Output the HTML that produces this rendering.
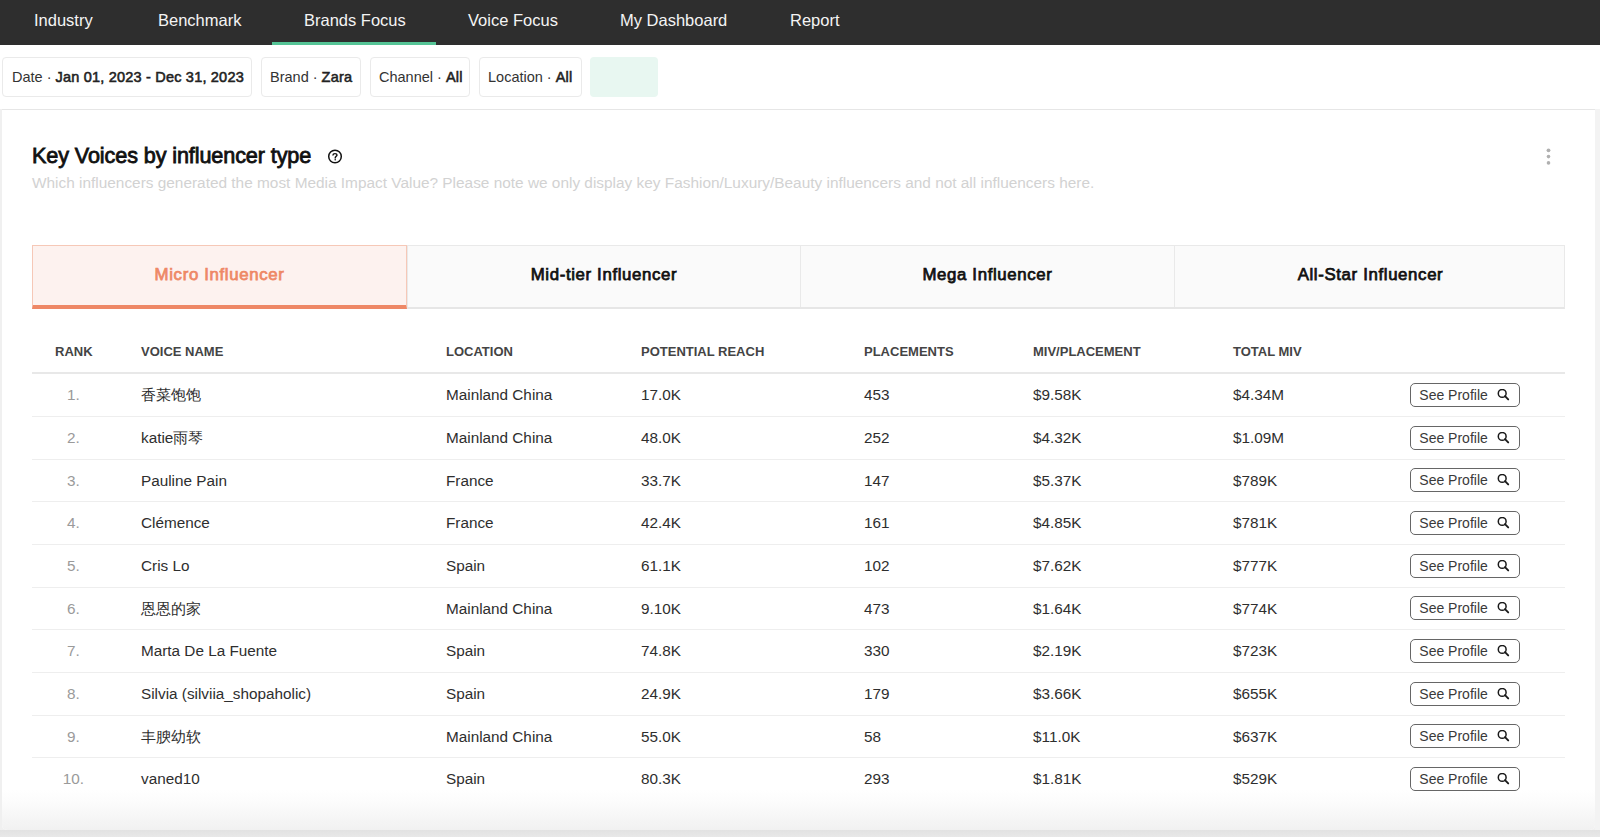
<!DOCTYPE html>
<html>
<head>
<meta charset="utf-8">
<style>
*{box-sizing:border-box;margin:0;padding:0}
html,body{width:1600px;height:837px;overflow:hidden}
body{background:#f0f0f0;font-family:"Liberation Sans",sans-serif;position:relative;color:#222}
.abs{position:absolute}
.nav{left:0;top:0;width:1600px;height:45px;background:#2e2e2e}
.nav span{position:absolute;top:11px;font-size:16.5px;color:#f4f4f4;white-space:nowrap;line-height:18px}
.nav .ul{position:absolute;left:272px;top:42px;width:164px;height:3px;background:#55c496}
.fbar{left:0;top:45px;width:1600px;height:64px;background:#fff}
.chip{position:absolute;top:57px;height:40px;border:1px solid #eaeaea;border-radius:4px;background:#fff;font-size:14.5px;color:#333;white-space:nowrap;line-height:38.6px}
.chip b{color:#222;font-weight:400;-webkit-text-stroke:0.55px #222;letter-spacing:0.2px}
.green{position:absolute;left:590px;top:57px;width:68px;height:40px;border-radius:4px;background:#e8f7f1}
.card{left:2px;top:109px;width:1593px;height:721px;background:#fff;border-top:1px solid #e6e6e6;border-radius:0 0 5px 5px}
.fade{left:2px;top:790px;width:1593px;height:40px;background:linear-gradient(#fff 0%,#fcfcfc 30%,#f1f1f1 100%);border-radius:0 0 5px 5px}
.rstrip{left:1595px;top:109px;width:5px;height:728px;background:#f3f3f3}
.bband{left:0;top:830px;width:1600px;height:7px;background:linear-gradient(#e2e2e2,#e8e8e8)}
.lstrip{left:0;top:109px;width:2px;height:728px;background:#f0f0f0}
#rows{position:absolute;left:0;top:0;z-index:2}
h1{position:absolute;left:32px;top:144px;font-size:21.6px;font-weight:400;-webkit-text-stroke:0.8px #111;letter-spacing:-0.1px;color:#111;white-space:nowrap;line-height:24px}
.sub{position:absolute;left:32px;top:174px;font-size:15.4px;color:#d2d2d2;white-space:nowrap;line-height:18px}
.tabs{left:32px;top:245px;width:1533px;height:64px;background:#fafafa;border:1px solid #e9e9e9;border-bottom:2px solid #e6e6e6}
.tab{position:absolute;top:0;height:100%;border-left:1px solid #e9e9e9;font-size:16.8px;font-weight:400;-webkit-text-stroke:0.75px #111;letter-spacing:0.65px;color:#111;text-align:center;line-height:58px;white-space:nowrap}
.tab.act{background:#fdf2ef;border:1px solid #f6c8b7;border-bottom:4px solid #ee8866;color:#ee8866;-webkit-text-stroke:0.75px #ee8866;top:-1px;height:64px;left:-1px}
.th{position:absolute;top:344px;font-size:13px;font-weight:700;color:#444;white-space:nowrap;line-height:16px}
.hline{left:32px;top:372px;width:1533px;height:2px;background:#e8e8e8}
.row{position:absolute;left:32px;width:1533px;height:43px;border-bottom:1px solid #eeeeee}
.c{position:absolute;top:0.4px;line-height:42px;font-size:15.3px;color:#2e2e2e;letter-spacing:0;white-space:nowrap}
.rk{color:#9a9a9a;letter-spacing:0;width:83px;text-align:center;left:0}
.nm{left:109px}.lc{left:414px}.pr{left:609px}.pl{left:832px}.mp{left:1001px}.tm{left:1201px}
.btn{position:absolute;left:1378px;top:9px;width:110px;height:24px;border:1px solid #666;border-radius:5px;font-size:14px;color:#3a3a3a;line-height:22px;padding-left:8.3px;white-space:nowrap}
.btn svg{position:absolute;left:85px;top:5px}
</style>
</head>
<body>
<div class="abs nav">
  <span style="left:34px">Industry</span>
  <span style="left:158px">Benchmark</span>
  <span style="left:304px">Brands Focus</span>
  <span style="left:468px">Voice Focus</span>
  <span style="left:620px">My Dashboard</span>
  <span style="left:790px">Report</span>
  <div class="ul"></div>
</div>
<div class="abs fbar"></div>
<div class="chip" style="left:2px;width:250px;padding-left:9px">Date · <b>Jan 01, 2023 - Dec 31, 2023</b></div>
<div class="chip" style="left:261px;width:100px;padding-left:8px">Brand · <b>Zara</b></div>
<div class="chip" style="left:370px;width:100px;padding-left:8px">Channel · <b>All</b></div>
<div class="chip" style="left:479px;width:103px;padding-left:8px">Location · <b>All</b></div>
<div class="green"></div>

<div class="abs card"></div>
<div class="abs rstrip"></div>
<div class="abs lstrip"></div>
<div class="abs bband"></div>

<h1>Key Voices by influencer type</h1>
<svg class="abs" style="left:326.5px;top:148px" width="16" height="16" viewBox="0 0 16 16">
  <circle cx="8" cy="8.5" r="6.3" fill="none" stroke="#111" stroke-width="1.5"/>
  <path d="M6 7 C6 5.2 10 5.2 10 7 C10 8.2 8.2 8.4 8.2 10" fill="none" stroke="#111" stroke-width="1.4" stroke-linecap="round"/>
  <circle cx="8.2" cy="11.8" r="0.8" fill="#111"/>
</svg>
<svg class="abs" style="left:1544px;top:148px" width="8" height="18" viewBox="0 0 8 18">
  <circle cx="4.5" cy="2.3" r="1.9" fill="#b0b0b0"/><circle cx="4.5" cy="8.6" r="1.8" fill="#b0b0b0"/><circle cx="4.5" cy="14.9" r="1.8" fill="#b0b0b0"/>
</svg>
<div class="sub">Which influencers generated the most Media Impact Value? Please note we only display key Fashion/Luxury/Beauty influencers and not all influencers here.</div>

<div class="abs tabs">
  <div class="tab act" style="width:375px">Micro Influencer</div>
  <div class="tab" style="left:374px;width:393px">Mid-tier Influencer</div>
  <div class="tab" style="left:767px;width:374px">Mega Influencer</div>
  <div class="tab" style="left:1141px;width:392px">All-Star Influencer</div>
</div>

<div class="th" style="left:55px">RANK</div>
<div class="th" style="left:141px">VOICE NAME</div>
<div class="th" style="left:446px">LOCATION</div>
<div class="th" style="left:641px">POTENTIAL REACH</div>
<div class="th" style="left:864px">PLACEMENTS</div>
<div class="th" style="left:1033px">MIV/PLACEMENT</div>
<div class="th" style="left:1233px">TOTAL MIV</div>
<div class="abs hline"></div>

<!--ROWS--><div id="rows">
<div class="row" style="top:374.00px"><div class="c rk">1.</div><div class="c nm">香菜饱饱</div><div class="c lc">Mainland China</div><div class="c pr">17.0K</div><div class="c pl">453</div><div class="c mp">$9.58K</div><div class="c tm">$4.34M</div><div class="btn">See Profile<svg width="14" height="13" viewBox="0 0 14 13"><circle cx="6.2" cy="4.4" r="3.9" fill="none" stroke="#1a1a1a" stroke-width="1.5"/><path d="M9 7.2 L12.2 10.4" stroke="#1a1a1a" stroke-width="1.9" stroke-linecap="round"/></svg></div></div>
<div class="row" style="top:416.67px"><div class="c rk">2.</div><div class="c nm">katie雨琴</div><div class="c lc">Mainland China</div><div class="c pr">48.0K</div><div class="c pl">252</div><div class="c mp">$4.32K</div><div class="c tm">$1.09M</div><div class="btn">See Profile<svg width="14" height="13" viewBox="0 0 14 13"><circle cx="6.2" cy="4.4" r="3.9" fill="none" stroke="#1a1a1a" stroke-width="1.5"/><path d="M9 7.2 L12.2 10.4" stroke="#1a1a1a" stroke-width="1.9" stroke-linecap="round"/></svg></div></div>
<div class="row" style="top:459.34px"><div class="c rk">3.</div><div class="c nm">Pauline Pain</div><div class="c lc">France</div><div class="c pr">33.7K</div><div class="c pl">147</div><div class="c mp">$5.37K</div><div class="c tm">$789K</div><div class="btn">See Profile<svg width="14" height="13" viewBox="0 0 14 13"><circle cx="6.2" cy="4.4" r="3.9" fill="none" stroke="#1a1a1a" stroke-width="1.5"/><path d="M9 7.2 L12.2 10.4" stroke="#1a1a1a" stroke-width="1.9" stroke-linecap="round"/></svg></div></div>
<div class="row" style="top:502.01px"><div class="c rk">4.</div><div class="c nm">Clémence</div><div class="c lc">France</div><div class="c pr">42.4K</div><div class="c pl">161</div><div class="c mp">$4.85K</div><div class="c tm">$781K</div><div class="btn">See Profile<svg width="14" height="13" viewBox="0 0 14 13"><circle cx="6.2" cy="4.4" r="3.9" fill="none" stroke="#1a1a1a" stroke-width="1.5"/><path d="M9 7.2 L12.2 10.4" stroke="#1a1a1a" stroke-width="1.9" stroke-linecap="round"/></svg></div></div>
<div class="row" style="top:544.68px"><div class="c rk">5.</div><div class="c nm">Cris Lo</div><div class="c lc">Spain</div><div class="c pr">61.1K</div><div class="c pl">102</div><div class="c mp">$7.62K</div><div class="c tm">$777K</div><div class="btn">See Profile<svg width="14" height="13" viewBox="0 0 14 13"><circle cx="6.2" cy="4.4" r="3.9" fill="none" stroke="#1a1a1a" stroke-width="1.5"/><path d="M9 7.2 L12.2 10.4" stroke="#1a1a1a" stroke-width="1.9" stroke-linecap="round"/></svg></div></div>
<div class="row" style="top:587.35px"><div class="c rk">6.</div><div class="c nm">恩恩的家</div><div class="c lc">Mainland China</div><div class="c pr">9.10K</div><div class="c pl">473</div><div class="c mp">$1.64K</div><div class="c tm">$774K</div><div class="btn">See Profile<svg width="14" height="13" viewBox="0 0 14 13"><circle cx="6.2" cy="4.4" r="3.9" fill="none" stroke="#1a1a1a" stroke-width="1.5"/><path d="M9 7.2 L12.2 10.4" stroke="#1a1a1a" stroke-width="1.9" stroke-linecap="round"/></svg></div></div>
<div class="row" style="top:630.02px"><div class="c rk">7.</div><div class="c nm">Marta De La Fuente</div><div class="c lc">Spain</div><div class="c pr">74.8K</div><div class="c pl">330</div><div class="c mp">$2.19K</div><div class="c tm">$723K</div><div class="btn">See Profile<svg width="14" height="13" viewBox="0 0 14 13"><circle cx="6.2" cy="4.4" r="3.9" fill="none" stroke="#1a1a1a" stroke-width="1.5"/><path d="M9 7.2 L12.2 10.4" stroke="#1a1a1a" stroke-width="1.9" stroke-linecap="round"/></svg></div></div>
<div class="row" style="top:672.69px"><div class="c rk">8.</div><div class="c nm">Silvia (silviia_shopaholic)</div><div class="c lc">Spain</div><div class="c pr">24.9K</div><div class="c pl">179</div><div class="c mp">$3.66K</div><div class="c tm">$655K</div><div class="btn">See Profile<svg width="14" height="13" viewBox="0 0 14 13"><circle cx="6.2" cy="4.4" r="3.9" fill="none" stroke="#1a1a1a" stroke-width="1.5"/><path d="M9 7.2 L12.2 10.4" stroke="#1a1a1a" stroke-width="1.9" stroke-linecap="round"/></svg></div></div>
<div class="row" style="top:715.36px"><div class="c rk">9.</div><div class="c nm">丰腴幼软</div><div class="c lc">Mainland China</div><div class="c pr">55.0K</div><div class="c pl">58</div><div class="c mp">$11.0K</div><div class="c tm">$637K</div><div class="btn">See Profile<svg width="14" height="13" viewBox="0 0 14 13"><circle cx="6.2" cy="4.4" r="3.9" fill="none" stroke="#1a1a1a" stroke-width="1.5"/><path d="M9 7.2 L12.2 10.4" stroke="#1a1a1a" stroke-width="1.9" stroke-linecap="round"/></svg></div></div>
<div class="row" style="top:758.03px;border-bottom:0"><div class="c rk">10.</div><div class="c nm">vaned10</div><div class="c lc">Spain</div><div class="c pr">80.3K</div><div class="c pl">293</div><div class="c mp">$1.81K</div><div class="c tm">$529K</div><div class="btn">See Profile<svg width="14" height="13" viewBox="0 0 14 13"><circle cx="6.2" cy="4.4" r="3.9" fill="none" stroke="#1a1a1a" stroke-width="1.5"/><path d="M9 7.2 L12.2 10.4" stroke="#1a1a1a" stroke-width="1.9" stroke-linecap="round"/></svg></div></div>
</div><!--/ROWS-->
<div class="abs fade"></div>
</body>
</html>
